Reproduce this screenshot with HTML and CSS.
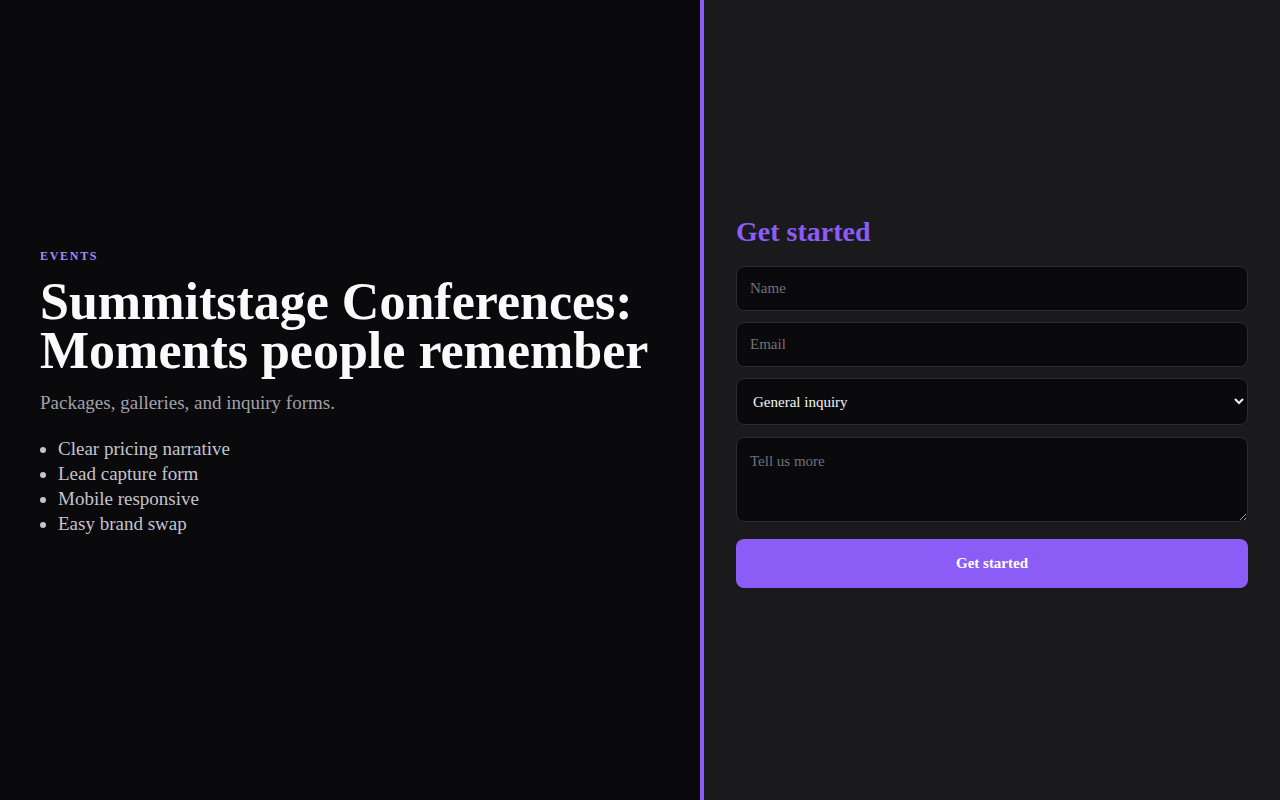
FILE: index.html
```html
<!DOCTYPE html>
<html lang="en">
<head>
    <meta charset="UTF-8">
    <title>Summitstage Conferences</title>
    <link rel="stylesheet" href="styles.css">
</head>

<body>

<div class="split">
    <!-- Pitch column -->
    <section class="pitch">
        <div class="eyebrow">Events</div>
        <h1>Summitstage Conferences: Moments people remember</h1>
        <p class="lede">Packages, galleries, and inquiry forms.</p>
        <ul class="perks">
            <li>Clear pricing narrative</li>
            <li>Lead capture form</li>
            <li>Mobile responsive</li>
            <li>Easy brand swap</li>
        </ul>
    </section>

    <!-- Inquiry form column -->
    <section class="inquiry">
        <h2>Get started</h2>
        <form class="lead-form">
            <input type="text" name="name" placeholder="Name">
            <input type="email" name="email" placeholder="Email">
            <select name="topic">
                <option>General inquiry</option>
                <option>Pricing</option>
                <option>Booking</option>
            </select>
            <textarea name="message" placeholder="Tell us more"></textarea>
            <button type="submit">Get started</button>
        </form>
    </section>
</div>

</body>
</html>
```

FILE: styles.css
```css
body {
    font-family: "Liberation Serif", "DejaVu Serif", serif;
    background: #0a0a0c;
    color: #f4f4f5;
    margin: 0;
    padding: 0;
}
.split {
    display: grid;
    grid-template-columns: 704px 1fr;
    min-height: 100vh;
}
.pitch {
    display: flex;
    flex-direction: column;
    justify-content: center;
    padding: 0 40px 16px;
    background: #0a0a0c;
    border-right: 4px solid #8b5cf6;
}
.eyebrow {
    font-size: 12px;
    font-weight: bold;
    letter-spacing: 1.7px;
    text-transform: uppercase;
    color: #a78bfa;
    margin-bottom: 13px;
}
h1 {
    font-size: 52px;
    line-height: 49px;
    margin: 0 0 17px;
    color: #fafafa;
}
.lede {
    font-size: 19px;
    color: #a1a1aa;
    margin: 0 0 22px;
}
.perks {
    margin: 0;
    padding-left: 18px;
    color: #c4c4cc;
    font-size: 19px;
    line-height: 25px;
}
.inquiry {
    display: flex;
    flex-direction: column;
    justify-content: center;
    padding: 4px 32px 0;
    background: #1a1a1c;
}
h2 {
    font-size: 28px;
    color: #8b5cf6;
    margin: 0 0 18px;
}
.lead-form {
    display: flex;
    flex-direction: column;
    gap: 11px;
}
input, select, textarea {
    font-family: inherit;
    font-size: 15px;
    color: #f4f4f5;
    background: #0a0a0c;
    border: 1px solid #2c2c30;
    border-radius: 8px;
    padding: 13px;
    box-sizing: border-box;
    width: 100%;
}
input {
    height: 45px;
}
input::placeholder, textarea::placeholder {
    color: #71717a;
}
select {
    height: 47px;
    padding-left: 12px;
}
textarea {
    height: 85px;
    margin-top: 1px;
    padding-top: 15px;
    resize: vertical;
}
button {
    margin-top: 6px;
    height: 49px;
    font-family: inherit;
    font-size: 15px;
    font-weight: bold;
    color: #fff;
    background: #8b5cf6;
    border: none;
    border-radius: 8px;
    cursor: pointer;
}
button:hover {
    background: #7c4deb;
}
```
